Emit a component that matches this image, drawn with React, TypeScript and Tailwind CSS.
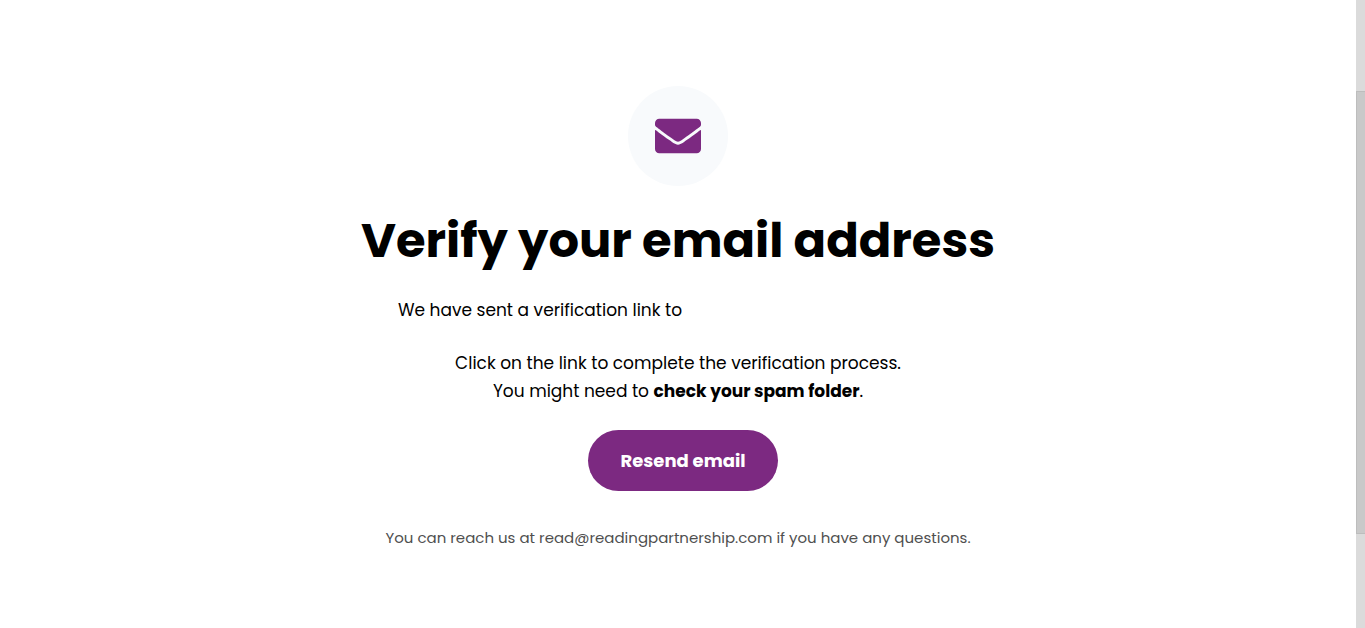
import { useState } from "react"
import { FaEnvelope } from "react-icons/fa"

const CONTACT_EMAIL = "read@readingpartnership.com"

function ScrollTrack() {
  return (
    <div className="flex w-[9px] shrink-0 flex-col bg-[#dbdbdb]" aria-hidden="true">
      <div className="grow-[91]" />
      <div className="grow-[443] border-y border-l border-[#bdbdbd] bg-[#c9c9c9]" />
      <div className="grow-[94]" />
    </div>
  )
}

export default function App() {
  const [email] = useState("")

  return (
    <div className="flex min-h-screen bg-white font-['Poppins','Inter',sans-serif] text-black">
      <main className="flex flex-1 flex-col items-center px-4 pt-[86px] pb-16 text-center">
        <div className="flex size-[100px] items-center justify-center rounded-full bg-[#f8fafc] text-[#7c2981]">
          <FaEnvelope size={46} aria-hidden="true" />
        </div>

        <h1 className="mt-[25px] text-5xl leading-[60px] font-bold">Verify your email address</h1>

        <p className="mt-[25px] flex text-[17px] leading-7">
          We have sent a verification link to
          <span className="w-[276px] text-left font-bold">{email}</span>
        </p>

        <p className="mt-[25px] text-[17px] leading-7">
          Click on the link to complete the verification process.
          <br />
          You might need to <strong className="font-bold">check your spam folder</strong>.
        </p>

        <button
          type="button"
          className="mt-[25px] ml-[10px] rounded-full bg-[#7c2981] px-8 py-4 text-lg leading-[29px] font-bold text-white"
        >
          Resend email
        </button>

        <p className="mt-[35px] text-[15px] leading-6 text-[#4f4f4f]">
          You can reach us at {CONTACT_EMAIL} if you have any questions.
        </p>
      </main>
      <ScrollTrack />
    </div>
  )
}
